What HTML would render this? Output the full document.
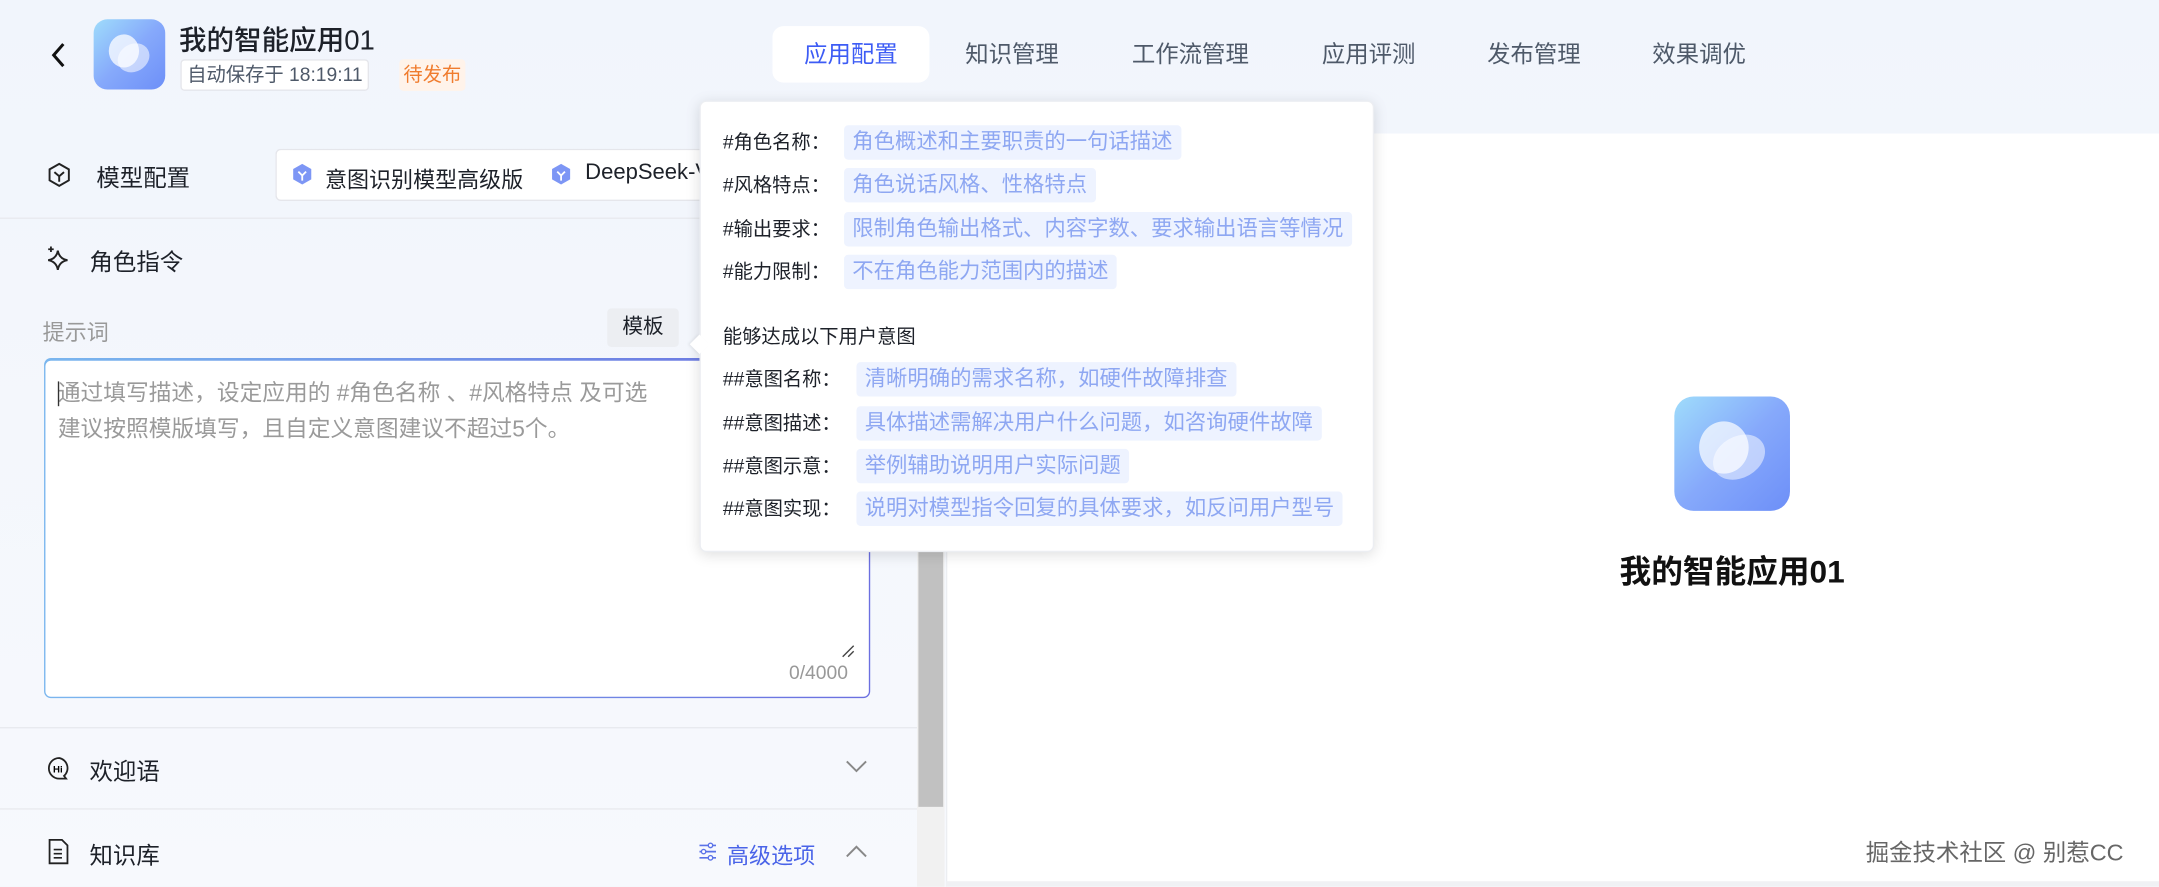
<!DOCTYPE html>
<html><head><meta charset="utf-8"><style>
*{box-sizing:border-box;margin:0;padding:0}
html,body{width:2159px;height:887px;overflow:hidden;background:#f6f8fc}
body{font-family:"Liberation Sans","Noto Sans CJK SC",sans-serif;color:#1d2129}
#w{position:absolute;left:0;top:0;width:1568px;height:644px;transform:scale(1.37691);transform-origin:0 0;background:linear-gradient(180deg,#f1f5fc 0%,#f7f9fd 100%)}
.a{position:absolute;white-space:nowrap}
.tab{position:absolute;top:19px;height:41px;line-height:41px;font-size:17px;color:#4e5969}
.chip{display:inline-block;background:#eef3ff;color:#8ea7f2;padding:0 6px;height:25px;line-height:25px;border-radius:3px;font-size:15.5px}
.row{position:absolute;left:525px;font-size:14px;color:#1d2129;height:25px;line-height:25px}
.lbl{display:inline-block;width:88px}
.lbl2{display:inline-block;width:97px}
.icon{background:linear-gradient(135deg,#9fdcfb 0%,#86a9fb 50%,#6d8ff8 100%);border-radius:10px;overflow:hidden}
</style></head><body><div id="w">
<svg class="a" style="left:35px;top:30px" width="16" height="20" viewBox="0 0 16 20"><path d="M11 2 L4 10 L11 18" fill="none" stroke="#111" stroke-width="2.2"/></svg>
<div class="a icon" style="left:68px;top:14px;width:52px;height:51px"><svg width="52" height="51" viewBox="0 0 52 51"><ellipse cx="22" cy="23" rx="11" ry="12" fill="#fff" opacity=".75"/><ellipse cx="29" cy="28" rx="12" ry="10" fill="#fff" opacity=".55" transform="rotate(-30 29 28)"/></svg></div>
<div class="a" style="left:130px;top:13px;font-size:20px;font-weight:500;color:#1d2129">我的智能应用01</div>
<div class="a" style="left:131px;top:43px;height:23px;line-height:21px;padding:0 4px;border:1px solid #e5e6eb;border-radius:3px;background:#fff;font-size:14px;color:#4e5969">自动保存于 18:19:11</div>
<div class="a" style="left:290px;top:43px;height:23px;line-height:23px;padding:0 3px;background:#fff3ea;border-radius:3px;font-size:14px;color:#f07c2e">待发布</div>
<div class="tab" style="left:561px;width:114px;background:#fff;border-radius:8px;color:#3d5cf5;text-align:center">应用配置</div>
<div class="tab" style="left:701px">知识管理</div>
<div class="tab" style="left:822px">工作流管理</div>
<div class="tab" style="left:960px">应用评测</div>
<div class="tab" style="left:1080px">发布管理</div>
<div class="tab" style="left:1200px">效果调优</div>
<svg class="a" style="left:35px;top:118px" width="16" height="18" viewBox="0 0 16 18"><path d="M8 1 L15 5 V13 L8 17 L1 13 V5 Z" fill="none" stroke="#222" stroke-width="1.4"/><path d="M4.5 7 L8 10 L11.5 7 M8 10 V14" fill="none" stroke="#222" stroke-width="1.4"/></svg>
<div class="a" style="left:70px;top:115px;font-size:17px">模型配置</div>
<div class="a" style="left:200px;top:108px;width:320px;height:38px;background:#fff;border:1px solid #e5e6eb;border-right:none;border-radius:4px 0 0 4px"></div>
<svg class="a" style="left:212px;top:118px" width="15" height="17" viewBox="0 0 16 18"><path d="M8 1 L15 5 V13 L8 17 L1 13 V5 Z" fill="#7d96f5"/><path d="M5 7 L8 10 L11 7 M8 10 V14" fill="none" stroke="#fff" stroke-width="1.4"/></svg>
<div class="a" style="left:236px;top:117px;font-size:16px">意图识别模型高级版</div>
<svg class="a" style="left:400px;top:118px" width="15" height="17" viewBox="0 0 16 18"><path d="M8 1 L15 5 V13 L8 17 L1 13 V5 Z" fill="#7d96f5"/><path d="M5 7 L8 10 L11 7 M8 10 V14" fill="none" stroke="#fff" stroke-width="1.4"/></svg>
<div class="a" style="left:425px;top:117px;font-size:16px;width:83px;overflow:hidden">DeepSeek-V3</div>
<div class="a" style="left:0;top:158px;width:666px;height:1px;background:#e8eaef"></div>
<svg class="a" style="left:33px;top:178px" width="20" height="20" viewBox="0 0 20 20"><path d="M9 4 Q10 10 16 11 Q10 12 9 18 Q8 12 2 11 Q8 10 9 4Z" fill="none" stroke="#222" stroke-width="1.4"/><path d="M4 1 V5 M2 3 H6" stroke="#222" stroke-width="1.3"/></svg>
<div class="a" style="left:65px;top:176px;font-size:17px">角色指令</div>
<div class="a" style="left:31px;top:228px;font-size:16px;color:#999">提示词</div>
<div class="a" style="left:441px;top:224px;width:52px;height:28px;line-height:28px;text-align:center;background:#eceef2;border-radius:3px;font-size:15px">模板</div>
<div class="a" style="left:32px;top:260px;width:600px;height:247px;border-radius:5px;background:linear-gradient(90deg,#7ab6ee,#6b6fe0)"><div style="position:absolute;left:1px;top:1.5px;right:1.5px;bottom:1.5px;background:#fff;border-radius:4px"></div></div>
<div class="a" style="left:42px;top:273px;font-size:16.5px;line-height:26px;color:#9a9a9a;width:465px;overflow:hidden">通过填写描述，设定应用的 #角色名称 、#风格特点 及可选<br>建议按照模版填写，且自定义意图建议不超过5个。</div>
<div class="a" style="left:42px;top:277px;width:1px;height:18px;background:#333"></div>
<svg class="a" style="left:611px;top:468px" width="10" height="10"><path d="M1 9 L9 1 M5 9 L9 5" stroke="#444" stroke-width="1"/></svg>
<div class="a" style="left:573px;top:480px;font-size:14px;color:#999">0/4000</div>
<div class="a" style="left:0;top:528px;width:666px;height:1px;background:#e8eaef"></div>
<svg class="a" style="left:34px;top:549px" width="18" height="18" viewBox="0 0 18 18"><path d="M9 1.5 A7.5 7.5 0 1 0 9 16.5 H14 L12.5 14.5 A7.5 7.5 0 0 0 9 1.5Z" fill="none" stroke="#222" stroke-width="1.3"/><text x="4.5" y="12" font-size="7" font-family="Liberation Sans" font-weight="bold">Hi</text></svg>
<div class="a" style="left:65px;top:546px;font-size:17px">欢迎语</div>
<svg class="a" style="left:614px;top:552px" width="16" height="10"><path d="M1 1 L8 8 L15 1" fill="none" stroke="#888" stroke-width="1.4"/></svg>
<div class="a" style="left:0;top:587px;width:666px;height:1px;background:#e8eaef"></div>
<svg class="a" style="left:35px;top:609px" width="15" height="19" viewBox="0 0 15 19"><path d="M1 1 H10 L14 5 V18 H1Z" fill="none" stroke="#222" stroke-width="1.3"/><path d="M4 8 H10 M4 11 H10 M4 14 H10" stroke="#222" stroke-width="1.2"/></svg>
<div class="a" style="left:65px;top:607px;font-size:17px">知识库</div>
<svg class="a" style="left:507px;top:611px" width="14" height="15" viewBox="0 0 14 15"><path d="M1 3 H13 M1 7.5 H13 M1 12 H13" stroke="#5b73e8" stroke-width="1.2"/><circle cx="9" cy="3" r="1.6" fill="#fff" stroke="#5b73e8"/><circle cx="4" cy="7.5" r="1.6" fill="#fff" stroke="#5b73e8"/><circle cx="9" cy="12" r="1.6" fill="#fff" stroke="#5b73e8"/></svg>
<div class="a" style="left:528px;top:608px;font-size:16px;color:#4a64e8">高级选项</div>
<svg class="a" style="left:614px;top:613px" width="16" height="10"><path d="M1 9 L8 2 L15 9" fill="none" stroke="#888" stroke-width="1.4"/></svg>
<div class="a" style="left:666px;top:97px;width:20px;height:547px;background:#f1f1f1"></div>
<div class="a" style="left:667px;top:100px;width:18px;height:486px;background:#c1c1c1"></div>
<div class="a" style="left:687px;top:97px;width:881px;height:547px;background:#fff;border-top-left-radius:8px;border-left:1px solid #eceef2"></div>
<div class="a" style="left:687px;top:640px;width:881px;height:4px;background:#f0f1f4"></div>
<div class="a icon" style="left:1216px;top:288px;width:84px;height:83px;border-radius:14px"><svg width="84" height="83" viewBox="0 0 84 83"><ellipse cx="36" cy="37" rx="18" ry="19" fill="#fff" opacity=".7"/><ellipse cx="47" cy="44" rx="20" ry="15" fill="#fff" opacity=".5" transform="rotate(-30 47 44)"/></svg></div>
<div class="a" style="left:1158px;top:396px;width:200px;text-align:center;font-size:23px;font-weight:bold;color:#111">我的智能应用01</div>
<div class="a" style="left:1355px;top:605px;font-size:17px;color:#666;text-shadow:0 0 1px #fff">掘金技术社区 @ 别惹CC</div>
<div class="a" style="left:508px;top:73px;width:490px;height:328px;background:#fff;border-radius:5px;box-shadow:0 2px 10px rgba(0,0,0,.13);border:1px solid #eceef2"></div>
<div class="a" style="left:503px;top:245px;width:10px;height:10px;background:#fff;transform:rotate(45deg);box-shadow:-1px 1px 2px rgba(0,0,0,.06)"></div>
<div class="row" style="top:91px"><span class="lbl">#角色名称：</span><span class="chip">角色概述和主要职责的一句话描述</span></div>
<div class="row" style="top:122px"><span class="lbl">#风格特点：</span><span class="chip">角色说话风格、性格特点</span></div>
<div class="row" style="top:154px"><span class="lbl">#输出要求：</span><span class="chip">限制角色输出格式、内容字数、要求输出语言等情况</span></div>
<div class="row" style="top:185px"><span class="lbl">#能力限制：</span><span class="chip">不在角色能力范围内的描述</span></div>
<div class="row" style="top:232px">能够达成以下用户意图</div>
<div class="row" style="top:263px"><span class="lbl2">##意图名称：</span><span class="chip">清晰明确的需求名称，如硬件故障排查</span></div>
<div class="row" style="top:295px"><span class="lbl2">##意图描述：</span><span class="chip">具体描述需解决用户什么问题，如咨询硬件故障</span></div>
<div class="row" style="top:326px"><span class="lbl2">##意图示意：</span><span class="chip">举例辅助说明用户实际问题</span></div>
<div class="row" style="top:357px"><span class="lbl2">##意图实现：</span><span class="chip">说明对模型指令回复的具体要求，如反问用户型号</span></div>
</div></body></html>
